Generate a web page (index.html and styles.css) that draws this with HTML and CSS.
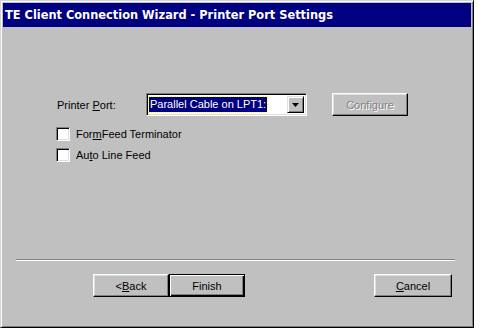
FILE: index.html
```html
<!DOCTYPE html>
<html>
<head>
<meta charset="utf-8">
<link rel="stylesheet" href="styles.css">
</head>
<body>
<div class="window">
  <div class="titlebar">TE Client Connection Wizard - Printer Port Settings</div>
  <div class="client">
    <div class="port-row">
      <span class="label">Printer <u>P</u>ort:</span>
      <div class="combo">
        <div class="combo-field"><span class="sel">Parallel Cable on LPT1:</span></div>
        <div class="combo-btn">
          <svg width="7" height="4" viewBox="0 0 7 4"><path d="M0 0h7L3.5 4z" fill="#000"/></svg>
        </div>
      </div>
      <div class="btn disabled">Confi<u>g</u>ure</div>
    </div>
    <div class="check-row">
      <span class="box"></span><span>For<u>m</u>Feed Terminator</span>
    </div>
    <div class="check-row">
      <span class="box"></span><span>Au<u>t</u>o Line Feed</span>
    </div>
    <div class="spacer"></div>
    <div class="separator"></div>
    <div class="button-row">
      <div class="btn">&lt;<u>B</u>ack</div>
      <div class="btn default">Finish</div>
      <div class="grow"></div>
      <div class="btn cancel"><u>C</u>ancel</div>
    </div>
  </div>
</div>
</body>
</html>
```
FILE: styles.css
```css
html, body {
  margin: 0;
  padding: 0;
  background: #fff;
}
body {
  width: 490px;
  height: 331px;
  font-family: "Liberation Sans", Arial, sans-serif;
  font-size: 11px;
  color: #000;
}
.window {
  box-sizing: border-box;
  width: 474px;
  height: 328px;
  background: #c0c0c0;
  border-top: 1px solid #d4d4d4;
  border-left: 1px solid #d4d4d4;
  border-right: 1px solid #000;
  border-bottom: 1px solid #000;
  box-shadow: inset 1px 1px 0 #fff, inset -1px -1px 0 #808080;
  padding: 2px;
  display: flex;
  flex-direction: column;
}
.titlebar {
  height: 24px;
  background: #000080;
  color: #fff;
  font-family: "DejaVu Sans", Verdana, sans-serif;
  font-weight: bold;
  font-size: 11.4px;
  line-height: 25px;
  padding-left: 2px;
  white-space: nowrap;
}
.client {
  flex: 1;
  display: flex;
  flex-direction: column;
  padding: 0 14px 0 13px;
}
.port-row {
  display: flex;
  align-items: center;
  margin-top: 66px;
  height: 23px;
}
.label {
  margin-left: 41px;
  width: 89px;
}
.combo {
  box-sizing: border-box;
  width: 161px;
  height: 23px;
  display: flex;
  border-top: 1px solid #808080;
  border-left: 1px solid #808080;
  border-right: 1px solid #fff;
  border-bottom: 1px solid #fff;
  box-shadow: inset 1px 1px 0 #000, inset -1px -1px 0 #dfdfdf;
  background: #fff;
  padding: 2px;
}
.combo-field {
  flex: 1;
  display: flex;
  align-items: center;
}
.sel {
  background: #000080;
  color: #fff;
  padding: 0 1px;
  line-height: 15px;
  outline: 1px dotted #ffff00;
}
.combo-btn {
  box-sizing: border-box;
  width: 17px;
  background: #c0c0c0;
  border-top: 1px solid #dfdfdf;
  border-left: 1px solid #dfdfdf;
  border-right: 1px solid #000;
  border-bottom: 1px solid #000;
  box-shadow: inset 1px 1px 0 #fff, inset -1px -1px 0 #808080;
  display: flex;
  align-items: center;
  justify-content: center;
}
.btn {
  box-sizing: border-box;
  width: 76px;
  height: 23px;
  background: #c0c0c0;
  border-top: 1px solid #fff;
  border-left: 1px solid #fff;
  border-right: 1px solid #000;
  border-bottom: 1px solid #000;
  box-shadow: inset -1px -1px 0 #808080, inset 1px 1px 0 #dfdfdf;
  display: flex;
  align-items: center;
  justify-content: center;
}
.port-row .btn {
  margin-left: 25px;
}
.btn.disabled {
  color: #808080;
  text-shadow: 1px 1px 0 #fff;
}
.btn.default {
  border: 1px solid #000;
  box-shadow: inset 1px 1px 0 #fff, inset -1px -1px 0 #000, inset -2px -2px 0 #808080;
}
.btn.cancel {
  width: 78px;
}
.check-row {
  display: flex;
  align-items: center;
  height: 14px;
  margin-left: 40px;
}
.check-row + .check-row {
  margin-top: 7px;
}
.port-row + .check-row {
  margin-top: 11px;
}
.box {
  box-sizing: border-box;
  width: 14px;
  height: 14px;
  background: #fff;
  border-top: 1px solid #808080;
  border-left: 1px solid #808080;
  border-right: 1px solid #fff;
  border-bottom: 1px solid #fff;
  box-shadow: inset 1px 1px 0 #000, inset -1px -1px 0 #dfdfdf;
  margin-right: 6px;
}
.spacer {
  flex: 1;
}
.separator {
  height: 1px;
  background: #808080;
  border-bottom: 1px solid #fff;
  margin-right: 2px;
}
.button-row {
  display: flex;
  margin-top: 13px;
  margin-bottom: 28px;
  padding-left: 77px;
  padding-right: 5px;
}
.grow {
  flex: 1;
}
```
